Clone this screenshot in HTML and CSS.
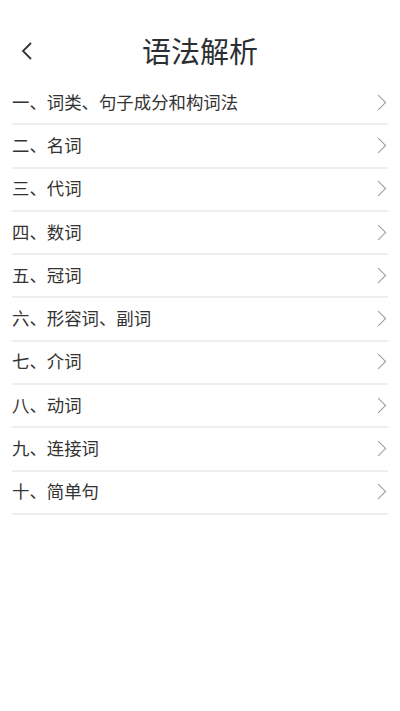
FILE: index.html
```html
<!DOCTYPE html>
<html lang="zh-CN">
<head>
    <meta charset="UTF-8">
    <meta name="viewport" content="width=device-width, initial-scale=1.0">
    <title>语法解析</title>
    <link rel="stylesheet" href="styles.css">
</head>
<body>

<div class="header">
    <span class="back">
        <svg width="14" height="20" viewBox="0 0 14 20"><polyline points="11,2 3,10 11,18" fill="none" stroke="#333" stroke-width="1.8"/></svg>
    </span>
    <h1>语法解析</h1>
</div>

<ul class="list">
    <li>一、词类、句子成分和构词法<span class="arrow"></span></li>
    <li>二、名词<span class="arrow"></span></li>
    <li>三、代词<span class="arrow"></span></li>
    <li>四、数词<span class="arrow"></span></li>
    <li>五、冠词<span class="arrow"></span></li>
    <li>六、形容词、副词<span class="arrow"></span></li>
    <li>七、介词<span class="arrow"></span></li>
    <li>八、动词<span class="arrow"></span></li>
    <li>九、连接词<span class="arrow"></span></li>
    <li>十、简单句<span class="arrow"></span></li>
</ul>

</body>
</html>
```

FILE: styles.css
```css
body {
    margin: 0;
    background-color: #fff;
    font-family: "Noto Sans CJK SC", "Noto Sans", sans-serif;
    color: #333;
}

.header {
    position: relative;
    height: 82px;
    display: flex;
    justify-content: center;
    align-items: center;
}

.header h1 {
    margin: 0;
    font-size: 29px;
    font-weight: 400;
    color: #2b2f33;
    padding-top: 18px;
}

.back {
    position: absolute;
    left: 20px;
    top: 41px;
    width: 14px;
    height: 20px;
}

.back svg {
    display: block;
}

.list {
    list-style: none;
    margin: 0 12px;
    padding: 0;
}

.list li {
    box-sizing: content-box;
    height: 38.3px;
    padding-bottom: 3px;
    border-bottom: 2px solid #eeeeee;
    display: flex;
    align-items: center;
    justify-content: space-between;
    font-size: 17.4px;
    color: #333;
}

.arrow {
    width: 10px;
    height: 10px;
    border-top: 1px solid #999;
    border-right: 1px solid #999;
    transform: rotate(45deg);
    margin-right: 4px;
    margin-top: 2px;
}
```
